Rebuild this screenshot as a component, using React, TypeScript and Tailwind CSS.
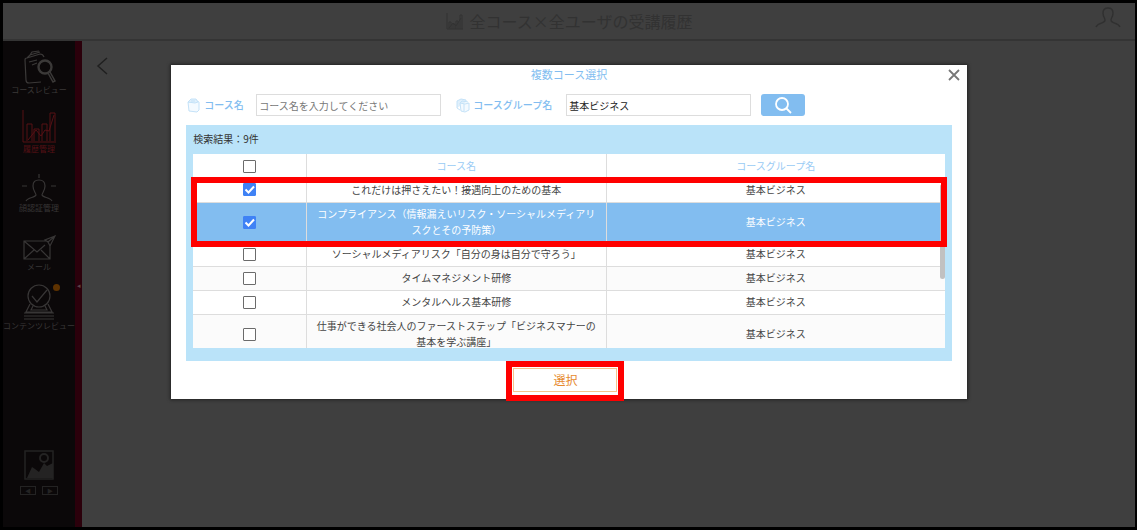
import React, { useState } from 'react';

const GROUP = '基本ビジネス';

const courses = [
  { name: 'これだけは押さえたい！接遇向上のための基本', selected: true },
  { name: 'コンプライアンス（情報漏えいリスク・ソーシャルメディアリスクとその予防策）', selected: true, active: true },
  { name: 'ソーシャルメディアリスク「自分の身は自分で守ろう」' },
  { name: 'タイムマネジメント研修' },
  { name: 'メンタルヘルス基本研修' },
  { name: '仕事ができる社会人のファーストステップ「ビジネスマナーの基本を学ぶ講座」' },
];

function CourseIcon() {
  return (
    <svg viewBox="0 0 34 34" className="h-[34px] w-[34px]" fill="none" stroke="currentColor" strokeWidth="1.2">
      <path d="M19 32L7 33q-3 0-3-3L3 10q0-2 2-2l13-4q3 0 4 3M5 8l3-3 10-3M8 5l2-3 7-1M7 12l8-2M10 15l5-2" />
      <circle cx="23" cy="17" r="6.5" strokeWidth="2.4" />
      <path d="M26 23l5 9 2-1-5-9" strokeWidth="1.5" />
    </svg>
  );
}

function HistoryIcon() {
  return (
    <svg viewBox="0 0 34 34" className="h-[34px] w-[34px]" fill="none" stroke="currentColor" strokeWidth="1">
      <path d="M1 1v32h33M5 32V15h5v17M12 32V20h5v12M20 32V15h5v17M28 32V4h5v28M6 31l8-10 5 6 4-6 4 1 5-16" />
    </svg>
  );
}

function FaceIcon() {
  return (
    <svg viewBox="0 0 34 28" className="h-7 w-[34px]" fill="none" stroke="currentColor" strokeWidth="1.2">
      <path d="M17 0v4M0 12h5M29 12h5M4 27c2-4 9-3 10-6 0-2-3-4-3-9 0-4 2-6 6-6s6 2 6 6c0 5-3 7-3 9 1 3 8 2 10 6" />
    </svg>
  );
}

function MailIcon() {
  return (
    <svg viewBox="0 0 34 26" className="h-[26px] w-[34px]" fill="none" stroke="currentColor" strokeWidth="1.2">
      <path d="M24 6H2v18h26V11M2 6l13 11 8-7M2 24l10-9M28 24l-9-9M33 1l-10 4 3 2 2 4zM33 1l-7 6" />
    </svg>
  );
}

function ReviewIcon() {
  return (
    <svg viewBox="0 0 34 36" className="h-9 w-[34px]" fill="none" stroke="currentColor" strokeWidth="1.2">
      <circle cx="17" cy="12" r="11" />
      <path d="M10 12l5 6 10-12M8 20l-4 8h26l-4-8M11 22l-2 4h16l-2-4M2 29h30M2 32h30M2 35h30" />
    </svg>
  );
}

function PictureIcon() {
  return (
    <svg viewBox="0 0 30 30" className="h-[30px] w-[30px]" fill="none" stroke="currentColor">
      <path d="M1 1h28v28H1z" strokeWidth="1.5" />
      <path d="M3 28l5-11 3 2 4 3 5-9 3 3 6-3v15z" fill="currentColor" stroke="none" />
      <circle cx="20" cy="8" r="4" strokeWidth="2" />
    </svg>
  );
}

function FolderIcon({ double = false }: { double?: boolean }) {
  return (
    <svg viewBox="0 0 14 15" className="h-[15px] w-[14px]" fill="none" stroke="#c4e2f8">
      {double ? (
        <>
          <path d="M1 10V3l4-2 5 1v2M1 10l3 2" fill="#e0f0fc" />
          <path d="M4 5l5 1 4-1v7l-4 2-4-1z" fill="#f4faff" />
          <path d="M4 5l2-2 6 1M8 6v7" />
        </>
      ) : (
        <>
          <path d="M1 4l1 9 8 1 2-2V4l-2-1z" fill="#f4faff" />
          <path d="M1 4l3-3h5l2 3-3 1zM4 3h4" fill="#e0f0fc" />
        </>
      )}
    </svg>
  );
}

const navItems = [
  { label: 'コースレビュー', icon: <CourseIcon />, style: 'h-[51px] text-[#3b3938]' },
  { label: '履歴管理', icon: <HistoryIcon />, style: 'h-[59px] text-[#561015]' },
  { label: '顔認証管理', icon: <FaceIcon />, style: 'h-[59px] text-[#383636]' },
  { label: 'メール', icon: <MailIcon />, style: 'h-[59px] text-[#383636]' },
  { label: 'コンテンツレビュー', icon: <ReviewIcon />, style: 'h-[59px] text-[#383636]', badge: true },
];

function Sidebar() {
  return (
    <nav className="relative flex w-[79px] shrink-0 flex-col border-r-[7px] border-[#2b000b] bg-[#0b0809] pt-1">
      {navItems.map((item) => (
        <a key={item.label} href="#" className={`flex flex-col items-center justify-end text-[8px] leading-[12px] whitespace-nowrap ${item.style}`}>
          <span className="relative">
            {item.icon}
            {item.badge && <span className="absolute top-0 -right-1 h-[7px] w-[7px] rounded-full bg-[#5e3200]" />}
          </span>
          {item.label}
        </a>
      ))}
      <span className="absolute top-[239px] -right-[6px] text-[7px] leading-[10px] text-[#5a4448]">◂</span>
      <div className="mt-auto mb-8 flex flex-col items-center gap-1.5 text-[#242323]">
        <PictureIcon />
        <div className="flex gap-1.5">
          <button aria-label="前へ" className="flex h-[9px] w-4 items-center justify-center border border-current text-[6px]">◀</button>
          <button aria-label="次へ" className="flex h-[9px] w-4 items-center justify-center border border-current text-[6px]">▶</button>
        </div>
      </div>
    </nav>
  );
}

function Checkbox({ label, checked, onChange }: { label: string; checked: boolean; onChange: () => void }) {
  return (
    <span className="mx-auto grid h-[13px] w-[13px]">
      <input
        type="checkbox"
        aria-label={label}
        checked={checked}
        onChange={onChange}
        className="peer col-start-1 row-start-1 h-[13px] w-[13px] appearance-none rounded-[1px] border border-[#6b6b6b] bg-white checked:border-[#3f82f5] checked:bg-[#3f82f5]"
      />
      <svg
        viewBox="0 0 13 13"
        className="pointer-events-none invisible col-start-1 row-start-1 h-[13px] w-[13px] peer-checked:visible"
        fill="none"
        stroke="white"
        strokeWidth="2"
      >
        <path d="M2.5 6.5l3 3 5.5-6" />
      </svg>
    </span>
  );
}

function CourseTable() {
  const [checked, setChecked] = useState(courses.map((c) => Boolean(c.selected)));
  const all = checked.every(Boolean);
  const toggle = (i: number) => setChecked(checked.map((v, n) => (n === i ? !v : v)));
  return (
    <div className="relative">
      <div className="h-[194px] overflow-y-auto bg-white [scrollbar-width:none]">
        <table className="w-full table-fixed border-collapse text-center text-[10px] leading-4 text-[#444]">
          <colgroup>
            <col className="w-[113px]" />
            <col className="w-[300px]" />
            <col />
          </colgroup>
          <thead>
            <tr className="h-6 text-[#9acbf5]">
              <th className="border-r border-[#ddd] p-0">
                <Checkbox label="すべて選択" checked={all} onChange={() => setChecked(checked.map(() => !all))} />
              </th>
              <th className="border-r border-[#ddd] p-0 font-normal">コース名</th>
              <th className="p-0 font-normal">コースグループ名</th>
            </tr>
          </thead>
          <tbody>
            {courses.map((course, i) => (
              <tr
                key={course.name}
                className={`border-b border-[#ddd] ${course.active ? 'h-10 bg-[#82bdf0] text-white' : i === 5 ? 'h-10 bg-[#fbfbfb]' : i === 3 ? 'h-6 bg-[#fbfbfb]' : 'h-6 bg-white'}`}
              >
                <td className="border-r border-[#ddd] p-0">
                  <Checkbox label={course.name} checked={checked[i]} onChange={() => toggle(i)} />
                </td>
                <td className="border-r border-[#ddd] px-[7px] py-0">{course.name}</td>
                <td className="p-0">{GROUP}</td>
              </tr>
            ))}
          </tbody>
        </table>
      </div>
      <span className="absolute top-[30px] right-0 h-[95px] w-[5px] rounded bg-[#c1c1c1]" />
      <span className="pointer-events-none absolute top-[23px] -right-[2px] -left-[2px] h-[70px] border-6 border-[#ff0000]" />
    </div>
  );
}

function CourseDialog() {
  return (
    <section
      role="dialog"
      aria-label="複数コース選択"
      className="relative w-[calc(70%+3px)] min-w-[760px] bg-white px-[15px] pb-[7px] shadow-[0_0_3px_1px_#222]"
    >
      <h2 className="pt-px text-center text-[11px] leading-4 text-[#82bdf0]">複数コース選択</h2>
      <button aria-label="閉じる" className="absolute top-1 right-[7px] text-[#777]">
        <svg viewBox="0 0 12 12" className="h-3 w-3" stroke="currentColor" strokeWidth="1.8">
          <path d="M1 1l10 10M11 1L1 11" />
        </svg>
      </button>
      <form className="mt-3 flex items-center text-[10px] leading-4" onSubmit={(e) => e.preventDefault()}>
        <label htmlFor="course" className="flex w-[70px] items-center gap-[3px] pl-px font-medium whitespace-nowrap text-[#82bdf0]">
          <FolderIcon />
          コース名
        </label>
        <input
          id="course"
          placeholder="コース名を入力してください"
          className="h-[22px] w-[185px] border border-[#ddd] px-0.5 text-[#333] placeholder:text-[#777]"
        />
        <label htmlFor="group" className="ml-[14px] flex w-[111px] items-center gap-[3px] pl-px font-medium whitespace-nowrap text-[#82bdf0]">
          <FolderIcon double />
          コースグループ名
        </label>
        <input id="group" defaultValue={GROUP} className="h-[22px] w-[185px] border border-[#ddd] px-0.5 text-[#222]" />
        <button aria-label="検索" className="ml-[10px] flex h-[22px] w-11 items-center justify-center rounded-[3px] bg-[#82bdf0] text-white">
          <svg viewBox="0 0 18 18" className="h-[18px] w-[18px]" fill="none" stroke="currentColor" strokeWidth="1.8">
            <circle cx="8" cy="8" r="6" />
            <path d="M12 12l5 5" />
          </svg>
        </button>
      </form>
      <div className="mt-[9px] bg-[#bae3f9] px-[7px] pt-1.5 pb-[13px]">
        <p className="mb-[7px] text-[10px] leading-4 text-[#333]">検索結果：9件</p>
        <CourseTable />
      </div>
      <div className="mt-[7px] flex justify-center pr-[7px]">
        <div className="relative">
          <button className="block h-6 w-[104px] border border-[#f5c48c] text-xs leading-none text-[#e68a2e]">選択</button>
          <span className="pointer-events-none absolute -inset-x-[7px] -top-[7px] -bottom-[9px] border-6 border-[#ff0000]" />
        </div>
      </div>
    </section>
  );
}

export default function App() {
  return (
    <div lang="ja" className="relative flex min-h-screen flex-col border-3 border-r-2 border-black bg-[#3f3f3f] font-['Noto_Sans_CJK_JP',sans-serif]">
      <header className="relative flex h-[38px] items-center justify-center border-b-2 border-[#343434] text-[#323232]">
        <h1 className="flex items-center gap-[7px] text-base leading-6">
          <svg viewBox="0 0 17 17" className="h-[17px] w-[17px]" fill="none" stroke="currentColor">
            <path d="M1 0v16h16M3 16v-7h2v7M7 16v-5h2v5M10 16V8h2v8M14 16V2h2v14M3 15l4-5 3 3 5-8" />
          </svg>
          全コース×全ユーザの受講履歴
        </h1>
        <button aria-label="ユーザ" className="absolute top-1 right-[14px] text-[#303030]">
          <svg viewBox="0 0 26 21" className="h-[21px] w-[26px]" fill="none" stroke="currentColor" strokeWidth="1.4">
            <path d="M1 20c2-5 9-3 9-7 0-2-2-3-2-7 0-3 2-5 5-5s5 2 5 5c0 4-2 5-2 7 0 4 7 2 9 7" />
          </svg>
        </button>
      </header>
      <div className="flex flex-1">
        <Sidebar />
        <main className="flex-1 px-[14px] py-[15px]">
          <a href="#" aria-label="戻る" className="inline-block text-[#202020]">
            <svg viewBox="0 0 12 18" className="h-[18px] w-3" fill="none" stroke="currentColor" strokeWidth="1.5">
              <path d="M11 1L2 9l9 8" />
            </svg>
          </a>
        </main>
      </div>
      <div className="absolute inset-0 flex items-start justify-center pt-[62px]">
        <CourseDialog />
      </div>
    </div>
  );
}
